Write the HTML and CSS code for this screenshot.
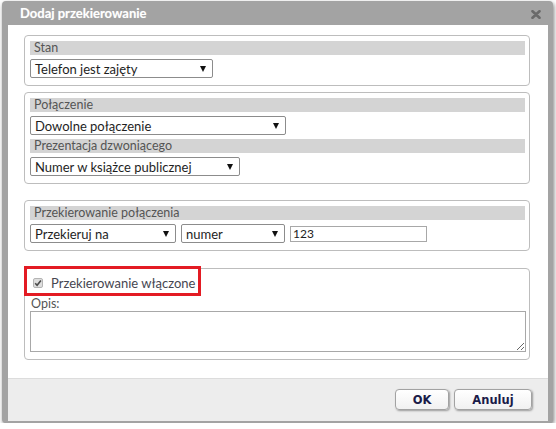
FILE: index.html
```html
<!DOCTYPE html>
<html lang="pl">
<head>
<meta charset="utf-8">
<title>Dodaj przekierowanie</title>
<link rel="stylesheet" href="styles.css">
</head>
<body>
<div class="dialog">
  <div class="titlebar">
    <span class="title">Dodaj przekierowanie</span>
    <svg class="close" width="10" height="9" viewBox="0 0 10 9"><path d="M1.5 1.2 L8.5 7.8 M8.5 1.2 L1.5 7.8" stroke="#6a6a6a" stroke-width="2.6" stroke-linecap="round"/></svg>
  </div>
  <div class="content">
    <div class="group g1">
      <div class="legend">Stan</div>
      <div class="row">
        <div class="select w183"><span>Telefon jest zajęty</span><span class="arrow"></span></div>
      </div>
    </div>
    <div class="group g2">
      <div class="legend">Połączenie</div>
      <div class="row">
        <div class="select w256"><span>Dowolne połączenie</span><span class="arrow"></span></div>
      </div>
      <div class="legend">Prezentacja dzwoniącego</div>
      <div class="row">
        <div class="select w210"><span>Numer w książce publicznej</span><span class="arrow"></span></div>
      </div>
    </div>
    <div class="group g3">
      <div class="legend">Przekierowanie połączenia</div>
      <div class="row">
        <div class="select w146"><span>Przekieruj na</span><span class="arrow"></span></div>
        <div class="select w104"><span>numer</span><span class="arrow"></span></div>
        <input class="text" type="text" value="123">
      </div>
    </div>
    <div class="group g4">
      <div class="checkrow">
        <span class="check"><svg width="8" height="8" viewBox="0 0 8 8"><path d="M1.2 4.2 L3.1 6.2 L6.9 1.6" fill="none" stroke="#4a4a4a" stroke-width="1.6"/></svg></span>
        <span class="checklabel">Przekierowanie włączone</span>
        <span class="highlight"></span>
      </div>
      <div class="opis">Opis:</div>
      <textarea class="area"></textarea>
    </div>
  </div>
  <div class="buttons">
    <button class="btn ok">OK</button>
    <button class="btn cancel">Anuluj</button>
  </div>
</div>
</body>
</html>
```
FILE: styles.css
```css
html, body {
  margin: 0;
  padding: 0;
  background: #ffffff;
}
.dialog {
  margin: 1px 0 0 2px;
  width: 551px;
  box-sizing: border-box;
  background: #a3a3a3;
  border-radius: 4px;
  padding: 0 5px 2px 6px;
  box-shadow: 1px 2px 4px rgba(0,0,0,0.5);
}
.titlebar {
  height: 24px;
  display: flex;
  align-items: center;
  justify-content: space-between;
  padding: 0 7px 0 12px;
}
.title {
  font-family: Lato, "Liberation Sans", sans-serif;
  font-weight: bold;
  font-size: 13px;
  color: #ffffff;
  text-shadow: 0 0 1px rgba(255,255,255,0.4);
}
.close {
  display: block;
  margin-top: 2px;
}
.content {
  background: #ffffff;
  padding: 10px 18px 18px 16px;
}
.group {
  border: 1px solid #bdbdbd;
  border-radius: 4px;
  padding: 5px 4px 7px 5px;
}
.g2 { margin-top: 6px; }
.g3 { margin-top: 16px; }
.g4 { margin-top: 17px; padding-top: 4px; }
.legend {
  height: 14px;
  line-height: 14px;
  background: #d4d4d4;
  color: #555555;
  font-family: Lato, "Liberation Sans", sans-serif;
  font-size: 12.5px;
  padding-left: 4px;
  margin-bottom: 4px;
}
.row {
  display: flex;
  align-items: center;
  gap: 5px;
  height: 19px;
  margin-bottom: 4px;
}
.group .row:last-child { margin-bottom: 0; }
.select {
  height: 19px;
  box-sizing: border-box;
  border: 1px solid #8c8c8c;
  border-radius: 2px;
  background: #ffffff;
  display: flex;
  align-items: center;
  justify-content: space-between;
  padding: 0 6px 0 4px;
  font-family: Lato, "Liberation Sans", sans-serif;
  font-size: 13px;
  color: #1e1e1e;
}
.w183 { width: 183px; }
.w256 { width: 256px; }
.w210 { width: 210px; }
.w146 { width: 146px; }
.w104 { width: 104px; }
.arrow {
  width: 0;
  height: 0;
  border-left: 3.5px solid transparent;
  border-right: 3.5px solid transparent;
  border-top: 6px solid #111111;
}
.text {
  width: 137px;
  height: 16px;
  box-sizing: border-box;
  border: 1px solid #a8a8a8;
  padding: 0 2px;
  margin: 0;
  font-family: Lato, "Liberation Sans", sans-serif;
  font-size: 12px;
  color: #222222;
  outline: none;
}
.checkrow {
  position: relative;
  height: 19px;
  display: flex;
  align-items: center;
  padding-left: 3px;
}
.check {
  width: 10px;
  height: 10px;
  box-sizing: border-box;
  border: 1px solid #b4b4b4;
  border-radius: 2px;
  background: #dedede;
  display: flex;
  align-items: center;
  justify-content: center;
}
.check svg { display: block; }
.checklabel {
  margin-left: 8px;
  font-family: Lato, "Liberation Sans", sans-serif;
  font-size: 13px;
  color: #464650;
}
.highlight {
  position: absolute;
  left: -6px;
  top: -7px;
  width: 177px;
  height: 30px;
  box-sizing: border-box;
  border: 3px solid #e31b23;
}
.opis {
  margin-top: 4px;
  height: 15px;
  line-height: 15px;
  font-family: Lato, "Liberation Sans", sans-serif;
  font-size: 12.5px;
  color: #555555;
  padding-left: 1px;
}
.area {
  display: block;
  width: 496px;
  height: 41px;
  box-sizing: border-box;
  border: 1px solid #a8a8a8;
  margin: 0;
  padding: 2px;
  resize: both;
  outline: none;
}
.buttons {
  height: 32px;
  border-top: 1px solid #dcdcdc;
  background: #ededed;
  display: flex;
  justify-content: flex-end;
  align-items: flex-start;
  gap: 5px;
  padding: 10px 16px 0 0;
}
.btn {
  height: 21px;
  border: 1px solid #a2a2a2;
  border-radius: 4px;
  background: linear-gradient(#ffffff, #f1f1f1);
  box-shadow: 1px 1px 2px rgba(0,0,0,0.35);
  font-family: "DejaVu Sans", Verdana, sans-serif;
  font-weight: bold;
  font-size: 11.5px;
  color: #1b1b48;
  padding: 0;
  margin: 0;
}
.ok { width: 54px; }
.cancel { width: 78px; }
```
